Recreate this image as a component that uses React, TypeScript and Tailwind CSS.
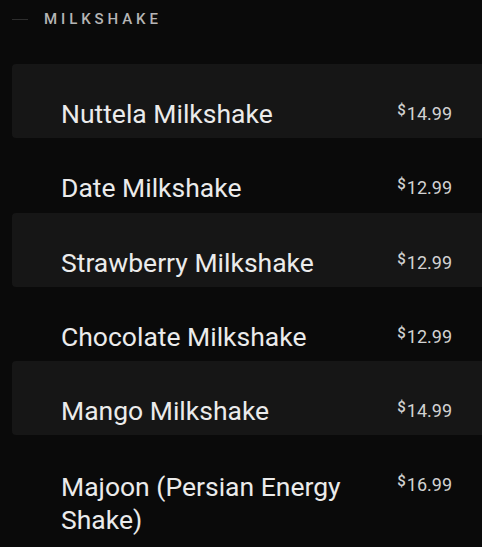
import React from "react";

const items = [
  { name: "Nuttela Milkshake", price: "14.99" },
  { name: "Date Milkshake", price: "12.99" },
  { name: "Strawberry Milkshake", price: "12.99" },
  { name: "Chocolate Milkshake", price: "12.99" },
  { name: "Mango Milkshake", price: "14.99" },
  { name: "Majoon (Persian Energy Shake)", price: "16.99" },
];

export default function App() {
  return (
    <div
      className="w-[482px] h-[547px] overflow-hidden bg-[#0a0a0a] pl-[12px]"
      style={{ fontFamily: "Roboto, 'Liberation Sans', sans-serif" }}
    >
      <div className="flex items-center h-[38px] pt-[1px]">
        <div className="w-[16px] h-[1px] bg-[#2e2e2e]" />
        <div className="ml-[16px] text-[15px] tracking-[3.9px] font-medium text-[#b5b5b5]">
          MILKSHAKE
        </div>
      </div>
      <div className="mt-[26px] flex flex-col -mr-[10px]">
        {items.map((it, i) => (
          <div
            key={i}
            className={`flex items-start justify-between h-[74.3px] pl-[49px] pr-[40px] pt-[33px] rounded-[4px] ${
              i % 2 === 0 ? "bg-[#161616]" : ""
            }`}
          >
            <div
              className={`text-[26.5px] leading-[33px] text-[#ebebeb] w-[300px] ${
                i === 5 ? "mt-[2px]" : "mt-[0px]"
              }`}
            >
              {it.name}
            </div>
            <div className="text-[18px] leading-[20px] text-[#d2d2d2] mt-[7px] flex items-start">
              <span className="text-[15px] leading-[15px] font-medium -mt-[1px] mr-[1px]">$</span>
              <span>{it.price}</span>
            </div>
          </div>
        ))}
      </div>
    </div>
  );
}
